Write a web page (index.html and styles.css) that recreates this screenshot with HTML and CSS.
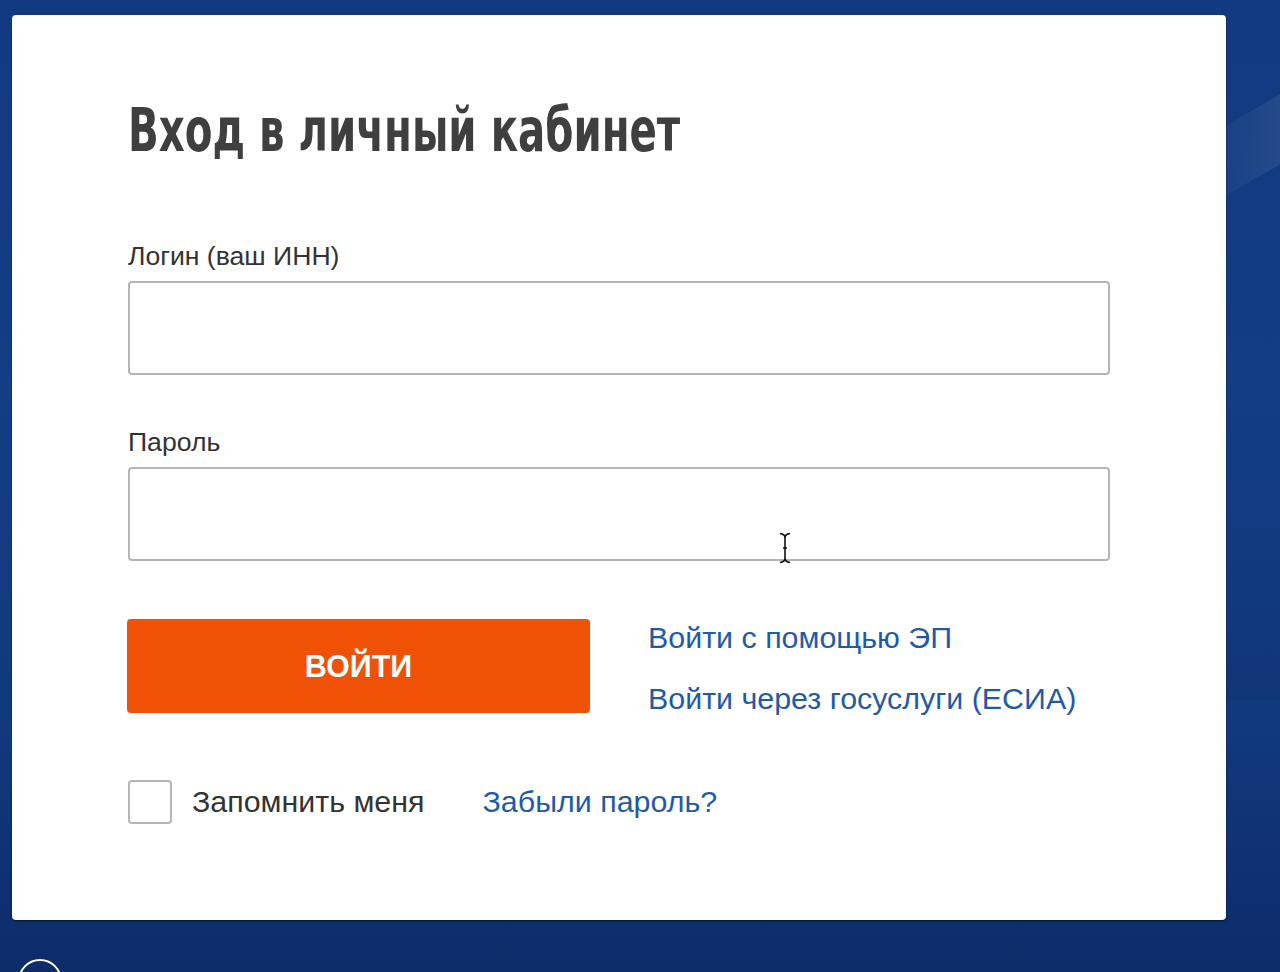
FILE: index.html
```html
<!DOCTYPE html>
<html lang="ru">
<head>
<meta charset="utf-8">
<title>Вход в личный кабинет</title>
<link rel="stylesheet" href="styles.css">
</head>
<body>
<div class="bg-streak streak-a"></div>
<div class="bg-streak streak-b"></div>
<main class="card">
  <h1 class="title">Вход в личный кабинет</h1>
  <form class="form">
    <div class="field">
      <label class="label" for="login">Логин (ваш ИНН)</label>
      <input class="input" id="login" type="text">
    </div>
    <div class="field field-pass">
      <label class="label" for="pass">Пароль</label>
      <div class="input-wrap">
        <input class="input" id="pass" type="password">
        <svg class="ibeam" width="14" height="32" viewBox="0 0 14 32">
          <path d="M2 1.5 Q7 2 7 6 L7 26 Q7 30 2 30.5 M12 1.5 Q7 2 7 6 M7 26 Q7 30 12 30.5 M5 16 L9 16" fill="none" stroke="#111" stroke-width="1.6"/>
        </svg>
      </div>
    </div>
    <div class="actions">
      <button class="btn" type="button">ВОЙТИ</button>
      <div class="alt-links">
        <a class="link" href="#">Войти с помощью ЭП</a>
        <a class="link" href="#">Войти через госуслуги (ЕСИА)</a>
      </div>
    </div>
    <div class="bottom-row">
      <label class="remember"><span class="checkbox"></span><span>Запомнить меня</span></label>
      <a class="link" href="#">Забыли пароль?</a>
    </div>
  </form>
</main>
<div class="corner-ring"></div>
</body>
</html>
```
FILE: styles.css
```css
html, body {
  margin: 0;
  height: 100%;
}
body {
  position: relative;
  overflow: hidden;
  font-family: "Liberation Sans", Arial, sans-serif;
  background:
    linear-gradient(180deg, #123a80 0%, #133d84 40%, #11397d 75%, #0d2c6a 100%);
  padding: 15px 54px 0 12px;
  box-sizing: border-box;
}
.bg-streak {
  position: absolute;
  pointer-events: none;
}
.streak-a {
  right: 0;
  top: 110px;
  width: 54px;
  height: 70px;
  background: linear-gradient(90deg, rgba(255, 255, 255, 0.03), rgba(255, 255, 255, 0.08));
  transform: skewY(-30deg);
}
.streak-b {
  right: 0;
  top: 470px;
  width: 54px;
  height: 230px;
  background: linear-gradient(180deg, rgba(0, 20, 60, 0), rgba(0, 20, 60, 0.08));
}
.card {
  position: relative;
  z-index: 1;
  background: #fff;
  border-radius: 4px;
  box-shadow: 0 1px 2px rgba(0, 0, 0, 0.55);
  height: 905px;
  box-sizing: border-box;
  padding: 80px 116px 0 116px;
}
.title {
  margin: 0;
  font-family: "Liberation Sans Narrow", "DejaVu Sans Condensed", "Roboto", sans-serif;
  font-stretch: condensed;
  font-weight: 700;
  font-size: 60px;
  line-height: 70px;
  color: #3f3f3f;
  white-space: nowrap;
  transform: scaleX(0.747);
  transform-origin: left center;
}
.form {
  margin-top: 76px;
  width: 982px;
}
.field {
  display: flex;
  flex-direction: column;
}
.field-pass {
  margin-top: 52px;
}
.label {
  font-size: 26.6px;
  line-height: 30px;
  color: #333;
  margin-bottom: 10px;
}
.input-wrap {
  position: relative;
}
.input {
  display: block;
  width: 100%;
  height: 94px;
  box-sizing: border-box;
  border: 2px solid #b5b5b5;
  border-radius: 4px;
  background: #fff;
  font-size: 24px;
  padding: 0 16px;
  outline: none;
}
.ibeam {
  position: absolute;
  left: 650px;
  top: 65px;
}
.actions {
  margin-top: 58px;
  display: flex;
  align-items: flex-start;
}
.btn {
  width: 463px;
  height: 94px;
  margin-left: -1px;
  border: 0;
  border-radius: 4px;
  background: #ef5107;
  color: #fff;
  font-family: "Liberation Sans", Arial, sans-serif;
  font-weight: 700;
  font-size: 30.5px;
}
.alt-links {
  margin-left: 58px;
  display: flex;
  flex-direction: column;
  gap: 25px;
}
.link {
  color: #1f5aa8;
  text-decoration: none;
  font-size: 30.4px;
  line-height: 36px;
}
.bottom-row {
  margin-top: 62px;
  display: flex;
  align-items: center;
  gap: 58px;
}
.remember {
  display: flex;
  align-items: center;
  gap: 20px;
  font-size: 30.4px;
  line-height: 36px;
  color: #333;
}
.checkbox {
  width: 44px;
  height: 44px;
  box-sizing: border-box;
  border: 2px solid #b5b5b5;
  border-radius: 4px;
  background: #fff;
  margin-top: 2px;
}
.corner-ring {
  position: absolute;
  left: 18px;
  top: 959px;
  width: 44px;
  height: 44px;
  box-sizing: border-box;
  border: 2px solid #fff;
  border-radius: 50%;
}
```
